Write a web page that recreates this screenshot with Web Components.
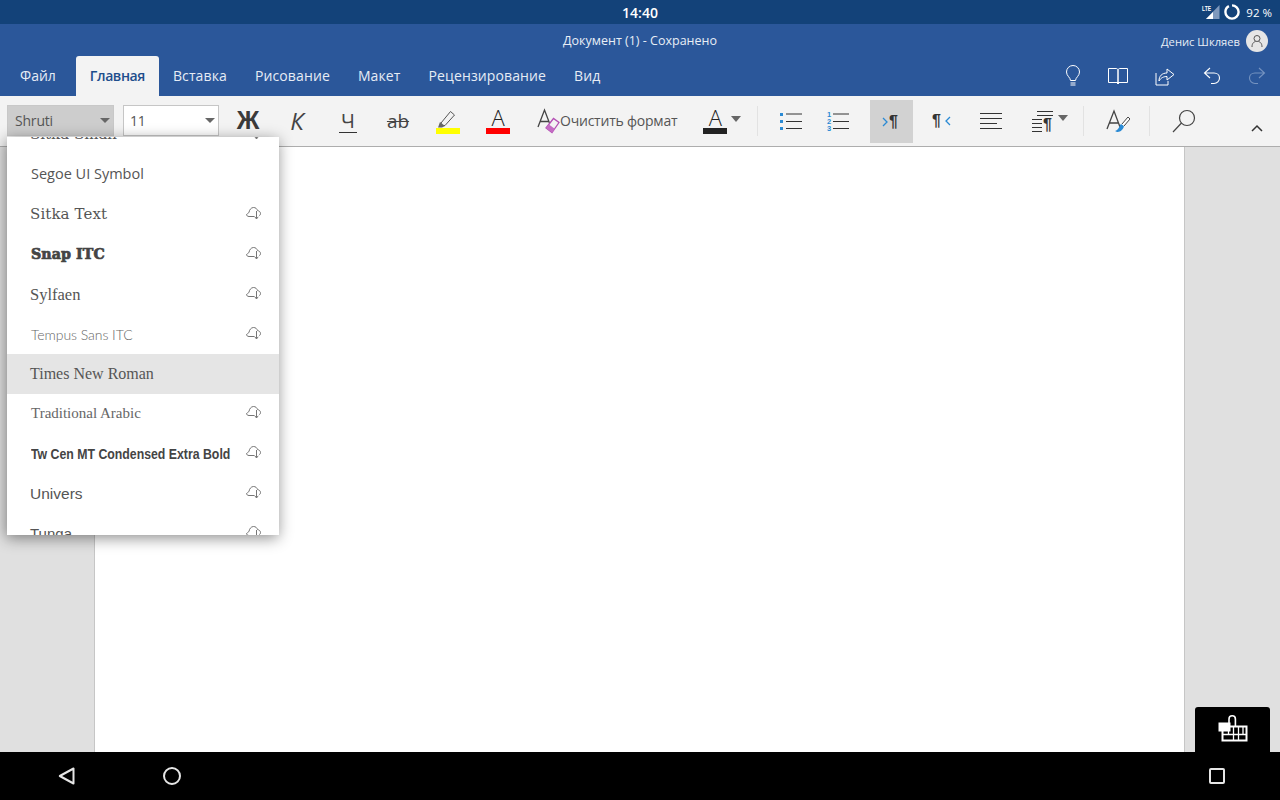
<!DOCTYPE html>
<html lang="ru"><head><meta charset="utf-8"><title>Документ</title>
<style>
html,body{margin:0;height:100%;overflow:hidden}
body{font-family:"Open Sans","Noto Sans",sans-serif;background:#e0e0e0}
</style></head><body>
<word-app></word-app>
<script>
const SANS='"Open Sans","Noto Sans",sans-serif';
function def(name,css,html){
  customElements.define(name,class extends HTMLElement{
    connectedCallback(){
      if(this.shadowRoot)return;
      const r=this.attachShadow({mode:'open'});
      r.innerHTML='<style>'+css+'</style>'+(typeof html==='function'?html(this):html);
    }
  });
}
const cloud='<svg width="15" height="14" viewBox="0 0 15 14" fill="none" stroke="#666" stroke-width=".9"><path d="M8.500 10.500H3C1.500 10.500.5 9.500.5 8.500 2 7.500 2 7 3 6.500 3.300 4 5 1.500 7.500 1.500c2 0 3.500 1.200 4 3 1.500.3 3 1.400 3 3 0 1-.5 1.800-1.100 2.200"/><path d="M10.500 5V12.500M8.800 10.800 10.500 13 12.200 10.800"/></svg>';

def('status-bar',`:host{display:flex;height:24px;background:#134279;color:#fff;position:relative;align-items:center;justify-content:center;font:600 14px ${SANS}}
.r{position:absolute;right:8px;top:0;height:24px;display:flex;align-items:center;font:400 11.500px ${SANS}}`,
`14:40<div class="r"><svg width="20" height="16" viewBox="0 0 20 16" style="margin-right:4px"><path d="M19.500 1V15H6Z" fill="#7f99bd"/><path d="M13 8V15H6Z" fill="#fff"/><text x="2" y="7" font-size="6.500" font-family="Liberation Sans,sans-serif" font-weight="700" fill="#fff" textLength="9" lengthAdjust="spacingAndGlyphs">LTE</text></svg><svg width="16" height="16" viewBox="0 0 16 16" style="margin-right:6px"><circle cx="8" cy="8" r="6.600" fill="none" stroke="#fff" stroke-width="2.400" stroke-dasharray="38 3.500" transform="rotate(-90 8 8)"/></svg><span>92 %</span></div>`);

def('title-bar',`:host{display:flex;height:32px;background:#2b579a;color:#e8eef6;position:relative;align-items:center;justify-content:center;font:400 12.500px ${SANS}}
.u{position:absolute;right:12px;top:0;height:34px;display:flex;align-items:center;gap:6px;font-size:11.200px}
.a{width:22px;height:22px;border-radius:50%;background:#e6e6e6;display:flex;align-items:center;justify-content:center}`,
`<slot></slot><div class="u"><span>Денис Шкляев</span><span class="a"><svg width="14" height="14" viewBox="0 0 14 14" fill="none" stroke="#555" stroke-width="1"><circle cx="7" cy="4.500" r="3"/><path d="M2 13c0-4 2-5 3.500-5.500M12 13c0-4-2-5-3.500-5.500"/></svg></span></div>`);

def('tab-item',`:host{display:flex;align-items:center;padding:0 14px 2px;height:40px;color:#e6ecf5;font:400 14px ${SANS};box-sizing:border-box;white-space:nowrap;letter-spacing:.12px}
:host([active]){background:#f3f3f3;color:#1e4e8c;font-weight:600;border-radius:3px 3px 0 0;letter-spacing:-.4px}`,`<slot></slot>`);

def('tab-bar',`:host{display:flex;height:40px;background:#2b579a;padding-left:6px;position:relative}
.i{position:absolute;right:0;top:0;height:40px;display:flex;align-items:center}
.i svg{display:block}`,
`<slot></slot><div class="i">
<svg style="margin-right:25px" width="20" height="22" viewBox="0 0 20 22" fill="none" stroke="#fff" stroke-width="1"><path d="M7.500 15.500C7.500 12.500 3.500 11 3.500 7a6.500 6.500 0 0 1 13 0c0 4-4 5.500-4 8.500Z"/><path d="M7.500 18h5M7.500 20h5"/></svg>
<svg style="margin-right:27px" width="20" height="18" viewBox="0 0 20 18" fill="none" stroke="#fff" stroke-width="1"><path d="M.5 1.500H8C9 1.500 10 2 10 3V15.500H.5ZM19.500 1.500H12C11 1.500 10 2 10 3V15.500H19.500ZM9 16.500H11"/></svg>
<svg style="margin-right:28px" width="20" height="20" viewBox="0 0 20 20" fill="none" stroke="#fff" stroke-width="1"><path d="M1 7V19H13V15"/><path d="M4 15C4 10 7 7 12 7V3L19 8.500 12 14V10.500C9 10.500 6 11.500 4 15Z"/></svg>
<svg style="margin-right:27px" width="18" height="18" viewBox="0 0 18 18" fill="none" stroke="#fff" stroke-width="1.100"><path d="M7 1 1.500 6 7 11M1.500 6H11C14 6 16.500 8 16.500 11S14 16.500 11 16.500H8"/></svg>
<svg style="margin-right:14px" width="18" height="18" viewBox="0 0 18 18" fill="none" stroke="#7593c0" stroke-width="1.100"><path d="M11 1 16.500 6 11 11M16.500 6H7C4 6 1.500 8 1.500 11S4 16.500 7 16.500H10"/></svg>
</div>`);

def('combo-box',`:host{display:flex;align-items:center;box-sizing:border-box;height:31px;background:#fff;border:1px solid #c6c6c6;color:#555;font:400 14px ${SANS};padding:0 3px 0 var(--pl,7px);justify-content:space-between;letter-spacing:-.2px}
:host([sel]){background:#cdcdcd;border-color:#c8c8c8}
i{width:0;height:0;border:5px solid transparent;border-top:5.500px solid #666;border-bottom:0}`,`<slot></slot><i></i>`);

def('rb-btn',`:host{display:flex;align-items:center;justify-content:center;height:43px;width:var(--w,50px);flex:none;color:#3a3a3a;position:relative}
:host([on]){background:#d2d2d2;margin-top:2px}`,`<slot></slot>`);

def('rb-sep',`:host{display:block;width:1px;height:30px;background:#e2e2e2;flex:none}`,``);

def('color-a',`:host{display:flex;flex-direction:column;align-items:center;font:300 22px/19px ${SANS};color:#222;width:24px}
b{display:block;width:24px;height:6px;background:var(--c,#222);margin-top:1px}`,`<slot></slot><b></b>`);

def('rb-bar',`:host{display:flex;align-items:center;height:51px;background:#f3f3f3;box-sizing:border-box;border-bottom:1px solid #adadad;padding:0 0 1px 7px;position:relative;font:400 14px ${SANS};color:#555}`,`<slot></slot>`);

def('font-row',`:host{display:flex;align-items:center;height:40px;padding:var(--pt,0) 18px var(--pb,0) var(--pl,23px);justify-content:space-between;color:var(--col,#555);flex:none;box-sizing:border-box;white-space:nowrap}
:host([sel]){background:#e5e5e5}
.f{display:inline-block;font:var(--f,15px "Open Sans",sans-serif);letter-spacing:var(--ls,0);transform:scaleX(var(--sx,1));transform-origin:0 50%;margin-right:var(--mr,0);-webkit-text-stroke:var(--st,0) currentColor}
.c{display:flex;position:absolute;right:18px;margin-top:-3px}`,
h=>`<span class="f"><slot></slot></span>${h.hasAttribute('cloud')?`<span class="c">${cloud}</span>`:''}`);

def('font-menu',`:host{position:absolute;left:7px;top:137px;width:272px;height:398px;background:#fff;box-shadow:-1px 3px 14px rgba(0,0,0,.45);overflow:hidden;display:block}
.s{margin-top:-23px;display:flex;flex-direction:column}`,`<div class="s"><slot></slot></div>`);

def('doc-area',`:host{flex:1;display:block;background:#e0e0e0;min-height:0;position:relative}
.p{box-sizing:border-box;margin-left:94px;width:1091px;height:100%;background:#fff;border:solid #c6c6c6;border-width:0 1px}`,`<div class="p"></div>`);

def('kbd-btn',`:host{position:absolute;left:1195px;top:707px;width:75px;height:45px;background:#000;border-radius:3px 3px 0 0;display:flex;align-items:center;justify-content:center}`,
`<svg width="32" height="30" viewBox="0 0 32 30"><path d="M12 9V4a3.200 3.200 0 0 1 6.400 0v7" fill="none" stroke="#fff" stroke-width="1.600"/><rect x="5.500" y="11.500" width="24" height="14" fill="none" stroke="#fff" stroke-width="2"/><path d="M6 19.500H29M11.500 12V19M16.500 12V25M21.500 12V25M26 12V19" stroke="#fff" stroke-width="1.300"/><rect x="1.500" y="7.500" width="12" height="9" fill="#fff"/></svg>`);

def('nav-bar',`:host{display:flex;height:48px;background:#000;flex:none;align-items:center;padding:0 55px 0 58px}
svg{display:block}.sp{flex:1}`,
`<svg width="17" height="18" viewBox="0 0 17 18" fill="none" stroke="#e6e6e6" stroke-width="2"><path d="M15.500 1.500V16.500L1.800 9Z" stroke-linejoin="round"/></svg>
<svg style="margin-left:88px" width="18" height="18" viewBox="0 0 18 18" fill="none" stroke="#e6e6e6" stroke-width="2"><circle cx="9" cy="9" r="8"/></svg>
<span class="sp"></span>
<svg width="16" height="16" viewBox="0 0 16 16" fill="none" stroke="#e6e6e6" stroke-width="2"><rect x="1" y="1" width="14" height="14" rx="1"/></svg>`);

def('word-app',`:host{display:flex;flex-direction:column;width:1280px;height:800px;position:relative;overflow:hidden}`,
`<status-bar></status-bar>
<title-bar>Документ (1) - Сохранено</title-bar>
<tab-bar>
 <tab-item style="margin-right:6px;letter-spacing:0">Файл</tab-item><tab-item active>Главная</tab-item><tab-item>Вставка</tab-item><tab-item>Рисование</tab-item><tab-item>Макет</tab-item><tab-item>Рецензирование</tab-item><tab-item>Вид</tab-item>
</tab-bar>
<rb-bar>
 <combo-box sel style="width:107px">Shruti</combo-box>
 <combo-box style="width:96px;margin-left:9px;--pl:6px">11</combo-box>
 <rb-btn style="margin-left:4px"><span style="font:700 25px 'Liberation Sans',sans-serif;color:#3a3a3a">Ж</span></rb-btn>
 <rb-btn style="margin-left:-1px;margin-right:1px"><span style="font:italic 400 24px 'Open Sans',sans-serif;color:#444">К</span></rb-btn>
 <rb-btn><span style="font:400 20px/23px 'Open Sans',sans-serif;border-bottom:1px solid #333;padding:0 2px;color:#444">Ч</span></rb-btn>
 <rb-btn><span style="font:400 19px 'Open Sans',sans-serif;text-decoration:line-through;text-decoration-thickness:1px;color:#444">ab</span></rb-btn>
 <rb-btn><svg width="24" height="27" viewBox="0 0 24 27"><path d="M5 16 14.500 4.500 18.500 8 9 18.500H5Z" fill="#f3f3f3" stroke="#555"/><path d="M4 15 9 19 6 20.500H2Z" fill="#666"/><rect y="21" width="24" height="6" fill="#ff0"/></svg></rb-btn>
 <rb-btn><color-a style="--c:#f00">A</color-a></rb-btn>
 <div style="display:flex;align-items:center;margin-left:14px;white-space:nowrap"><svg width="23" height="27" viewBox="0 0 23 27"><path d="M1 20 7.500 3 14 20M3.500 14.500H11.500" fill="none" stroke="#444" stroke-width="1.300"/><path d="M9 21 16.500 11.500 22 15.500 15 25.500Z" fill="#f3f3f3" stroke="#b44fb4" stroke-width="1.300"/><path d="M9 21 12 17.500 18 22 15 25.500Z" fill="#c46cc4"/></svg><span style="margin-left:0;letter-spacing:-.22px">Очистить формат</span></div>
 <color-a style="--c:#222;margin-left:26px">A</color-a>
 <svg style="margin-left:4px;margin-top:-4px" width="10" height="6" viewBox="0 0 10 6"><path d="M0 0H10L5 6Z" fill="#666"/></svg>
 <rb-sep style="margin-left:16px"></rb-sep>
 <rb-btn style="--w:46px;margin-left:10px"><svg width="24" height="20" viewBox="0 0 24 20"><path d="M1 2H4V5H1ZM1 9H4V12H1ZM1 16H4V19H1Z" fill="#2a8ad4"/><path d="M7 3H23M7 10.500H23M7 17.500H23" stroke="#333"/></svg></rb-btn>
 <rb-btn style="--w:46px;margin-left:1px"><svg width="24" height="22" viewBox="0 0 24 22"><text font-size="7.500" font-weight="700" fill="#2a8ad4" font-family="Liberation Sans,sans-serif" x="1" y="7">1</text><text font-size="7.500" font-weight="700" fill="#2a8ad4" font-family="Liberation Sans,sans-serif" x="1" y="14">2</text><text font-size="7.500" font-weight="700" fill="#2a8ad4" font-family="Liberation Sans,sans-serif" x="1" y="21">3</text><path d="M7 4H23M7 11.500H23M7 18.500H23" stroke="#333"/></svg></rb-btn>
 <rb-btn on style="--w:43px;margin-left:9px"><svg width="22" height="18" viewBox="0 0 22 18"><path d="M2 5 6 9 2 13" fill="none" stroke="#2a8ad4" stroke-width="1.300"/><text x="8" y="14" font-size="16" font-weight="700" fill="#333" font-family="Liberation Sans,sans-serif">¶</text></svg></rb-btn>
 <rb-btn style="--w:44px;margin-left:8px"><svg width="22" height="18" viewBox="0 0 22 18"><text x="0" y="14" font-size="16" font-weight="700" fill="#333" font-family="Liberation Sans,sans-serif">¶</text><path d="M18 5 14 9 18 13" fill="none" stroke="#2a8ad4" stroke-width="1.300"/></svg></rb-btn>
 <rb-btn style="--w:44px;margin-left:4px"><svg width="23" height="18" viewBox="0 0 23 18" stroke="#333"><path d="M0 1.500H22M0 6.500H22M0 11.500H17M0 16.500H22"/></svg></rb-btn>
 <rb-btn style="--w:40px;margin-left:17px"><svg width="22" height="22" viewBox="0 0 22 22"><path d="M5 1.500H21M5 5.500H21M0 9.500H10M0 13.500H10M0 17.500H10M0 21.500H10" stroke="#333"/><text x="11" y="20" font-size="16" font-weight="700" fill="#333" font-family="Liberation Sans,sans-serif">¶</text></svg><svg style="margin-left:4px;margin-top:-6px" width="10" height="6" viewBox="0 0 10 6"><path d="M0 0H10L5 6Z" fill="#666"/></svg></rb-btn>
 <rb-sep style="margin-left:13px"></rb-sep>
 <rb-btn style="--w:44px;margin-left:12px"><svg width="24" height="24" viewBox="0 0 24 24"><path d="M1 20 8 2 14 18M3.500 14H12" fill="none" stroke="#444" stroke-width="1.300"/><path d="M11 23C13 23 17 22 18 17L15 15C13 17 13 21 9 22Z" fill="#2a8ad4"/><path d="M16 15 22 8 24 10 18 17" fill="#fff" stroke="#444"/></svg></rb-btn>
 <rb-sep style="margin-left:9px"></rb-sep>
 <rb-btn style="--w:44px;margin-left:12px"><svg width="24" height="24" viewBox="0 0 24 24" fill="none" stroke="#444" stroke-width="1.200"><circle cx="15" cy="9" r="7.500"/><path d="M9.500 14 1 23"/></svg></rb-btn>
 <svg style="margin-left:45px;margin-top:14px" width="12" height="8" viewBox="0 0 12 8" fill="none" stroke="#333" stroke-width="1.500"><path d="M1 7 6 2 11 7"/></svg>
</rb-bar>
<doc-area></doc-area>
<nav-bar></nav-bar>
<kbd-btn></kbd-btn>
<font-menu>
 <font-row cloud style="--f:15px 'DejaVu Serif',serif">Sitka Small</font-row>
 <font-row style="--f:14.500px 'Open Sans',sans-serif;--pl:24px;--pb:2px">Segoe UI Symbol</font-row>
 <font-row cloud style="--f:15px 'DejaVu Serif',serif;--ls:.1px">Sitka Text</font-row>
 <font-row cloud style="--f:900 14.200px 'DejaVu Serif',serif;--st:.7px;--pl:24px;--ls:.1px;--col:#444">Snap ITC</font-row>
 <font-row cloud style="--f:16.500px 'Liberation Serif',serif;--pt:1px">Sylfaen</font-row>
 <font-row cloud style="--f:300 14px 'Lato',sans-serif;--pl:24px;--col:#666;--ls:-.05px">Tempus Sans ITC</font-row>
 <font-row sel style="--f:16px 'Liberation Serif',serif">Times New Roman</font-row>
 <font-row cloud style="--f:15px 'Liberation Serif',serif;--pl:24px;--pb:2px;--col:#666">Traditional Arabic</font-row>
 <font-row cloud style="--f:700 15px 'Liberation Sans',sans-serif;--sx:.82;--mr:-44px;--pl:24px;--pb:2px;--col:#444">Tw Cen MT Condensed Extra Bold</font-row>
 <font-row cloud style="--f:15.500px 'Liberation Sans',sans-serif;--pb:1px">Univers</font-row>
 <font-row cloud style="--f:15px 'Liberation Sans',sans-serif;--pb:1px">Tunga</font-row>
</font-menu>`);
</script>
</body></html>
